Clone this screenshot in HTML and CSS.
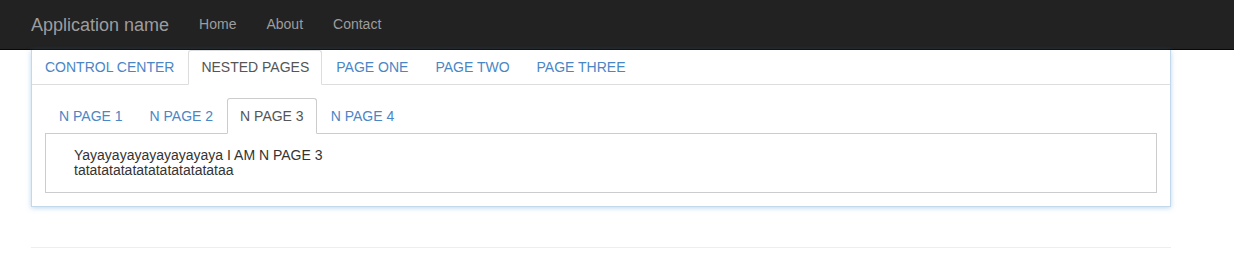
FILE: index.html
```html
<!DOCTYPE html>
<html lang="en">
<head>
    <meta charset="UTF-8">
    <title>Nested Pages - Application name</title>
    <link rel="stylesheet" href="styles.css">
</head>
<body>
    <div class="navbar">
        <div class="container nav-inner">
            <a class="brand" href="#">Application name</a>
            <a class="nav-link" href="#">Home</a>
            <a class="nav-link" href="#">About</a>
            <a class="nav-link" href="#">Contact</a>
        </div>
    </div>
    <div class="container">
        <div class="panel">
            <ul class="tabs">
                <li><a href="#">CONTROL CENTER</a></li>
                <li class="active"><a href="#">NESTED PAGES</a></li>
                <li><a href="#">PAGE ONE</a></li>
                <li><a href="#">PAGE TWO</a></li>
                <li><a href="#">PAGE THREE</a></li>
            </ul>
            <div class="panel-body">
                <ul class="tabs inner-tabs">
                    <li><a href="#">N PAGE 1</a></li>
                    <li><a href="#">N PAGE 2</a></li>
                    <li class="active"><a href="#">N PAGE 3</a></li>
                    <li><a href="#">N PAGE 4</a></li>
                </ul>
                <div class="tab-content">
                    Yayayayayayayayayaya I AM N PAGE 3<br>
                    tatatatatatatatatatatatataa
                </div>
            </div>
        </div>
        <hr class="footer-line">
    </div>
</body>
</html>
```

FILE: styles.css
```css
body {
    margin: 0;
    font-family: "Liberation Sans", Arial, sans-serif;
    font-size: 14px;
    color: #333;
    background-color: #fff;
}
a {
    text-decoration: none;
}
.container {
    width: 1140px;
    padding: 0 15px;
    margin-left: 16px;
}
.navbar {
    height: 49px;
    background-color: #222;
    border-bottom: 1px solid #080808;
}
.nav-inner {
    display: flex;
    align-items: center;
}
.brand {
    padding: 15px 15px 14px 0;
    font-size: 18px;
    line-height: 20px;
    color: #9d9d9d;
}
.nav-link {
    padding: 15px;
    line-height: 19px;
    color: #9d9d9d;
}
.panel {
    border: 1px solid #c4d8ec;
    border-top: none;
    box-shadow: 0 1px 5px rgba(66, 139, 202, 0.35);
    margin-bottom: 40px;
}
.tabs {
    display: flex;
    list-style: none;
    margin: 0;
    padding: 0;
    border-bottom: 1px solid #ddd;
}
.tabs li {
    margin-bottom: -1px;
    margin-right: 1px;
}
.tabs a {
    display: block;
    padding: 7px 12px 8px;
    line-height: 18px;
    color: #4a86c5;
    border: 1px solid transparent;
    border-radius: 3px 3px 0 0;
}
.tabs .active a {
    color: #555;
    background-color: #fff;
    border-color: #ddd;
    border-bottom-color: transparent;
}
.panel-body {
    padding: 13px;
}
.inner-tabs {
    padding-left: 1px;
    border-bottom-color: #ccc;
}
.inner-tabs a {
    padding: 8px 12px;
}
.inner-tabs .active a {
    border-color: #ccc;
    border-bottom-color: transparent;
}
.tab-content {
    border: 1px solid #ccc;
    border-top: none;
    padding: 14px 28px 14px;
    line-height: 15px;
    color: #333;
}
.footer-line {
    margin: 0;
    border: none;
    border-top: 1px solid #eee;
}
```
